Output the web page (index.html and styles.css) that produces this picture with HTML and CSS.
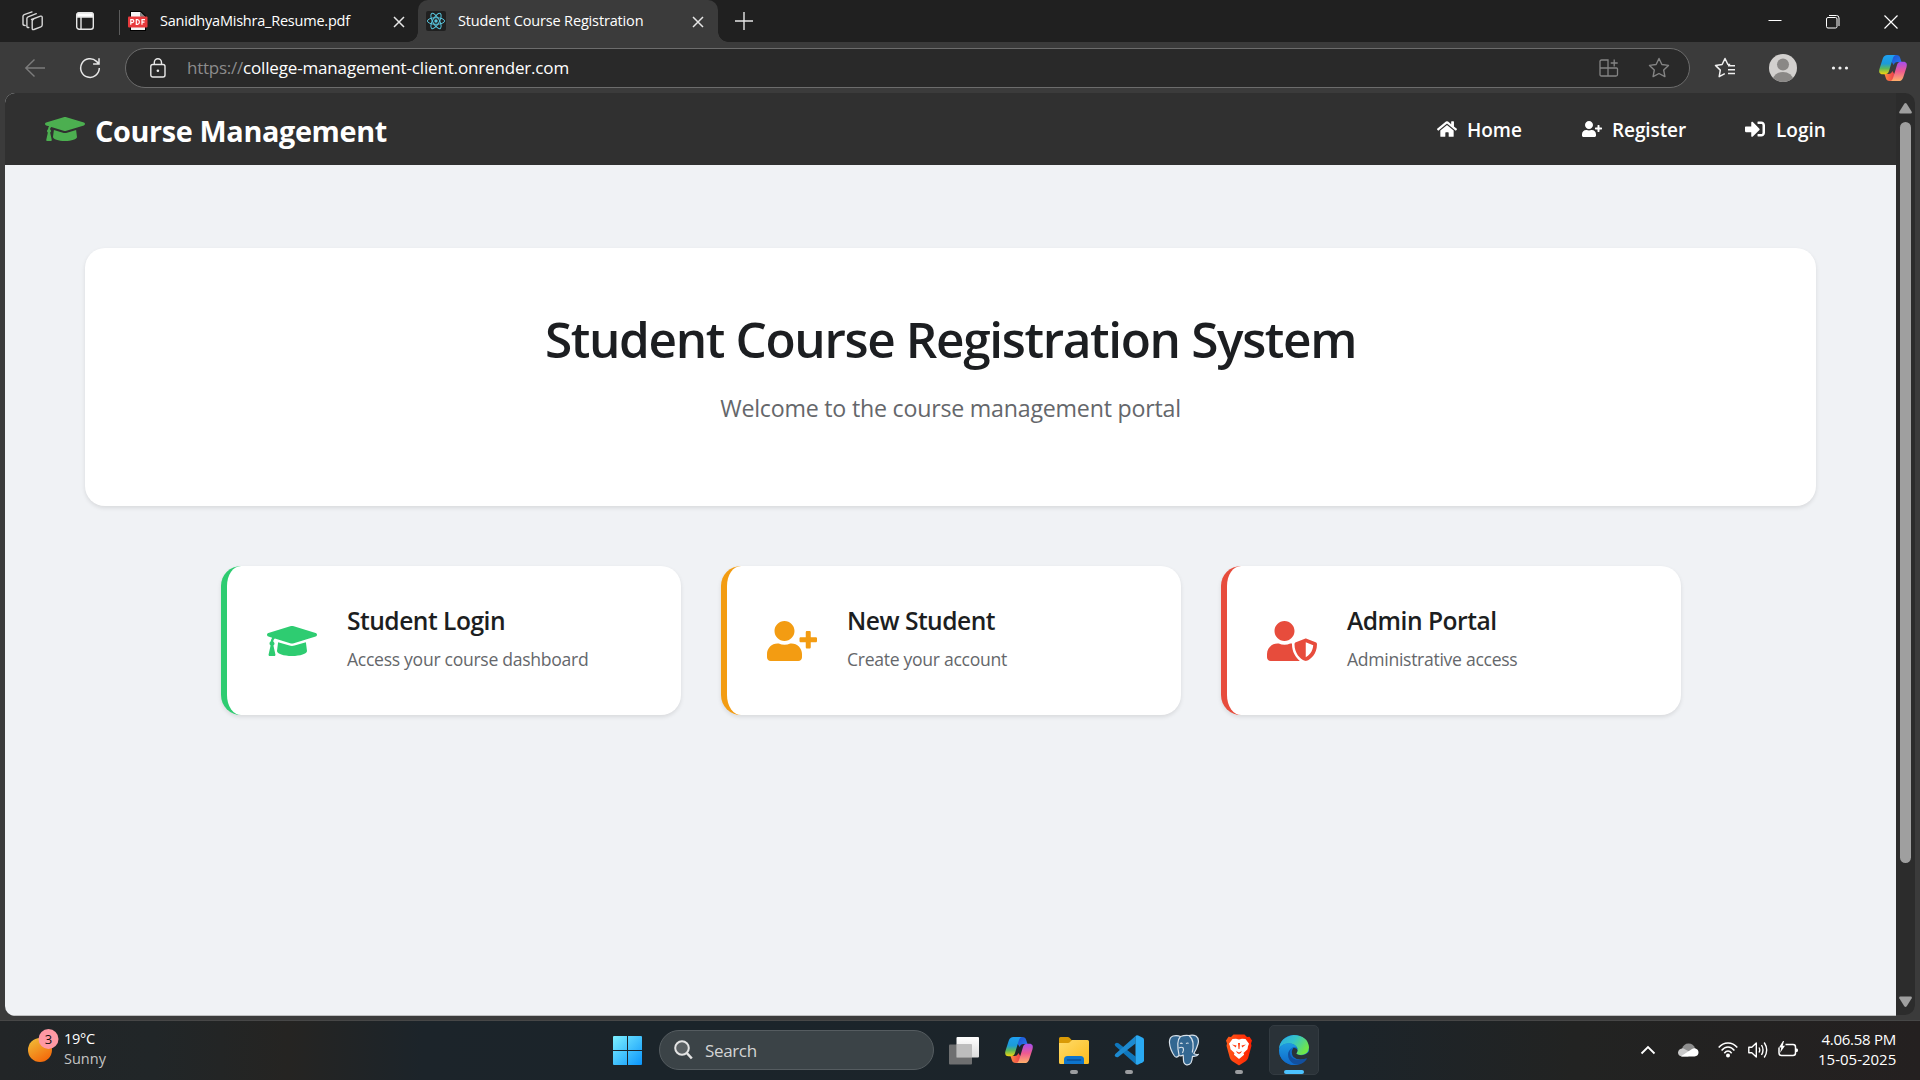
FILE: index.html
```html
<!DOCTYPE html>
<html lang="en">
<head>
<meta charset="utf-8">
<title>Student Course Registration</title>
<link rel="stylesheet" href="styles.css">
</head>
<body>
<svg class="defs" width="0" height="0" aria-hidden="true">
  <defs>
    <linearGradient id="cpBlue" x1="0" y1="0" x2="0" y2="1"><stop offset="0" stop-color="#1fa0f2"/><stop offset=".45" stop-color="#1c9bd8"/><stop offset=".7" stop-color="#5db85a"/><stop offset="1" stop-color="#f6d60c"/></linearGradient>
    <linearGradient id="cpDark" x1="0" y1="0" x2="1" y2="1"><stop offset="0" stop-color="#1b4fd0"/><stop offset="1" stop-color="#2a7df0"/></linearGradient>
    <linearGradient id="cpPink" x1="0" y1="0" x2="0" y2="1"><stop offset="0" stop-color="#a44df0"/><stop offset=".5" stop-color="#ee5a90"/><stop offset="1" stop-color="#ffb06a"/></linearGradient>
    <linearGradient id="cpRed" x1="0" y1="0" x2="1" y2="0"><stop offset="0" stop-color="#ff8a3d"/><stop offset="1" stop-color="#e8384f"/></linearGradient>
    <linearGradient id="sun" x1="0" y1="0" x2=".6" y2="1"><stop offset="0" stop-color="#f0c23a"/><stop offset="1" stop-color="#f36b0c"/></linearGradient>
    <linearGradient id="win" x1="0" y1="0" x2="1" y2="1"><stop offset="0" stop-color="#7df0ff"/><stop offset="1" stop-color="#0a95fb"/></linearGradient>
    <linearGradient id="tvBack" x1="0" y1="0" x2="0" y2="1"><stop offset="0" stop-color="#fff"/><stop offset="1" stop-color="#dcdcdc"/></linearGradient>
    <linearGradient id="folder" x1="0" y1="0" x2="1" y2="1"><stop offset="0" stop-color="#ffdb6a"/><stop offset="1" stop-color="#fcbc1c"/></linearGradient>
    <linearGradient id="brave" x1="0" y1="0" x2="1" y2="0"><stop offset="0" stop-color="#ff5a1a"/><stop offset="1" stop-color="#ff1f00"/></linearGradient>
    <linearGradient id="edgeTop" x1="0" y1="0" x2="1" y2=".5"><stop offset="0" stop-color="#2aa7e4"/><stop offset=".5" stop-color="#35c4c9"/><stop offset="1" stop-color="#6fe64a"/></linearGradient>
    <linearGradient id="edgeLeft" x1="0" y1="0" x2="0" y2="1"><stop offset="0" stop-color="#1e9be2"/><stop offset="1" stop-color="#0f68c8"/></linearGradient>
    <symbol id="copilot" viewBox="0 0 30 30">
      <path d="M13 2h5.500c2 0 3 1 3.600 2.800L23.500 9h-4c-2 0-3.200 1.200-3.800 3L13 8z" fill="url(#cpDark)"/>
      <path d="M17 28h-5.500c-2 0-3-1-3.600-2.800L6.500 21h4c2 0 3.200-1.200 3.800-3L17 22z" fill="url(#cpRed)"/>
      <path d="M9.500 2H18c-1.800.3-2.600 1.700-3.200 3.600L11 18c-.7 2.200-2 3.300-4.200 3.300H4.600C1.400 21.300.6 19 1.500 15.800L4.800 5.600C5.600 3.200 7 2 9.500 2z" fill="url(#cpBlue)"/>
      <path d="M20.500 28H12c1.800-.3 2.600-1.700 3.200-3.600L19 12c.7-2.200 2-3.300 4.200-3.300h2.200c3.200 0 4 2.300 3.100 5.500l-3.300 10.200c-.8 2.400-2.200 3.600-4.700 3.600z" fill="url(#cpPink)"/>
    </symbol>
    <symbol id="cap" viewBox="0 0 640 512"><path d="M622.34 153.2L343.4 67.5c-15.200-4.670-31.600-4.670-46.790 0L17.660 153.200c-23.540 7.230-23.540 38.360 0 45.590l48.630 14.940c-10.670 13.190-17.230 29.280-17.880 46.900C38.780 266.150 32 276.110 32 288c0 10.780 5.680 19.850 13.860 25.650L20.330 428.530C18.110 438.520 25.710 448 35.940 448h56.110c10.240 0 17.840-9.480 15.620-19.470L82.140 313.650C90.320 307.850 96 298.780 96 288c0-11.570-6.470-21.250-15.660-26.870.76-15.020 8.440-28.300 20.690-36.720L296.600 284.500c9.060 2.780 26.440 6.250 46.790 0l278.950-85.700c23.550-7.240 23.550-38.360 0-45.600zM352.790 315.090c-28.530 8.760-52.840 3.920-65.590 0l-145.020-44.550L128 384c0 35.350 85.960 64 192 64s192-28.650 192-64l-14.180-113.470-145.030 44.560z"/></symbol>
    <symbol id="user-plus" viewBox="0 0 640 512"><path d="M624 208h-64v-64c0-8.800-7.200-16-16-16h-32c-8.800 0-16 7.200-16 16v64h-64c-8.800 0-16 7.200-16 16v32c0 8.800 7.200 16 16 16h64v64c0 8.800 7.200 16 16 16h32c8.800 0 16-7.200 16-16v-64h64c8.800 0 16-7.200 16-16v-32c0-8.800-7.200-16-16-16zm-400 48c70.700 0 128-57.300 128-128S294.700 0 224 0 96 57.300 96 128s57.300 128 128 128zm89.600 32h-16.700c-22.200 10.200-46.900 16-72.900 16s-50.600-5.800-72.900-16h-16.700C60.200 288 0 348.200 0 422.400V464c0 26.500 21.500 48 48 48h352c26.500 0 48-21.500 48-48v-41.600c0-74.200-60.200-134.400-134.400-134.400z"/></symbol>
  </defs>
</svg>

<header class="tabstrip">
  <svg class="ic-workspaces" viewBox="0 0 22 20" fill="none" stroke="#d8d8d8" stroke-width="1.400" stroke-linejoin="round" stroke-linecap="round"><path d="M9.500 8.500l9-3.300c1-.3 1.700.1 1.700 1.100v7.700c0 .9-.4 1.500-1.300 1.800l-7 2.700c-1 .4-1.700 0-1.700-1V10c0-.8.500-1.300 1.300-1.600"/><path d="M6.800 16.500c-1.200.2-1.900-.2-1.900-1.300V7.500c0-.8.4-1.300 1.200-1.600l8.200-3.200"/><path d="M3.200 14.500C1.700 14.500 1 14 1 13V5.200c0-.8.400-1.300 1.200-1.600L10 .9"/></svg>
  <svg class="ic-panel" viewBox="0 0 18 18" fill="none" stroke="#e6e6e6" stroke-width="1.400"><rect x=".7" y=".7" width="16.600" height="16.600" rx="2.500"/><path d="M1 2.500Q1 1 2.500 1h13Q17 1 17 2.500V5H1z" fill="#fff"/><path d="M5 5v12"/></svg>
  <i class="tab-divider"></i>
  <div class="tab tab-pdf">
    <svg width="20" height="20" viewBox="0 0 20 20"><path d="M2 0h11l5 5v15H2z" fill="#000"/><path d="M3 1h9.500v4.500H17V19H3z" fill="#f4f4f4"/><path d="M12.500 1L17 5.500h-4.500z" fill="#888"/><rect y="5.500" width="19.500" height="11" rx="1" fill="#e83a3d"/><path d="M2.800 13.800V8.600h1.500a1.500 1.500 0 0 1 0 3H3M8.300 8.600v4.700h1.200q1.900-.2 1.900-2.300t-1.900-2.400zM14 13.800V8.600h3M14 11.200h2.500" stroke="#fff" stroke-width="1.200" fill="none"/></svg>
    <span class="tab-title t1">SanidhyaMishra_Resume.pdf</span>
    <svg class="close" viewBox="0 0 12 12"><path d="M1 1l10 10M11 1L1 11" stroke="#e6e6e6" stroke-width="1.500"/></svg>
  </div>
  <div class="tab tab-active">
    <svg width="20" height="20" viewBox="0 0 20 20" fill="none"><rect width="20" height="20" rx="2" fill="#202020"/><g stroke="#58c4dc" stroke-width="1"><ellipse cx="10" cy="10" rx="8.600" ry="3.300"/><ellipse cx="10" cy="10" rx="8.600" ry="3.300" transform="rotate(60 10 10)"/><ellipse cx="10" cy="10" rx="8.600" ry="3.300" transform="rotate(120 10 10)"/></g><circle cx="10" cy="10" r="1.700" fill="#58c4dc"/></svg>
    <span class="tab-title t2">Student Course Registration</span>
    <svg class="close" viewBox="0 0 12 12"><path d="M1 1l10 10M11 1L1 11" stroke="#e6e6e6" stroke-width="1.500"/></svg>
  </div>
  <svg class="ic-plus" viewBox="0 0 18 18"><path d="M9 0v18M0 9h18" stroke="#e6e6e6" stroke-width="1.400"/></svg>
  <div class="window-controls">
    <svg width="14" height="14" viewBox="0 0 14 14"><path d="M.5 5.500h13" stroke="#fff"/></svg>
    <svg width="14" height="14" viewBox="0 0 14 14" fill="none" stroke="#fff"><rect x=".5" y="2.500" width="10.500" height="10.500" rx="1.500"/><path d="M3 .5h7.500q2.500 0 2.500 2.500v8"/></svg>
    <svg width="14" height="14" viewBox="0 0 14 14"><path d="M.5.5l13 13M13.500.5l-13 13" stroke="#fff" stroke-width="1.200"/></svg>
  </div>
</header>

<div class="toolbar">
  <svg class="ic-back" width="22" height="22" viewBox="0 0 22 22" fill="none" stroke="#7c7c7c" stroke-width="1.400"><path d="M21 11H1.500M10.500 2.500L1.800 11l8.700 8.500"/></svg>
  <svg class="ic-reload" width="22" height="22" viewBox="0 0 22 22" fill="none" stroke="#e8e8e8" stroke-width="1.500"><path d="M20.300 11A9.300 9.300 0 1 1 17.500 4.400l2.300 2.300M20 1.200v5.900h-5.900"/></svg>
  <div class="address">
    <svg class="ic-lock" width="16" height="20" viewBox="0 0 16 20" fill="none" stroke="#e8e8e8" stroke-width="1.400"><rect x=".8" y="6.500" width="14.200" height="12.500" rx="2"/><path d="M4.300 6.500V4.400a3.600 3.600 0 0 1 7.200 0v2.100"/><circle cx="7.900" cy="12.700" r="1.300" fill="#e8e8e8" stroke="none"/></svg>
    <span class="url"><span class="scheme">https://</span><span class="host">college-management-client.onrender.com</span></span>
    <svg class="ic-apps" width="20" height="20" viewBox="0 0 20 20" fill="none" stroke="#848484" stroke-width="1.300"><path d="M2.500 2h6.500v16H2.500Q1 18 1 16.500v-13Q1 2 2.500 2zM1 10h16.500q1 0 1 1v5.500q0 1.500-1.500 1.500H9M15.200 1.500v7M11.700 5h7"/></svg>
    <svg class="ic-star" width="22" height="22" viewBox="0 0 22 22" fill="none" stroke="#848484" stroke-width="1.400" stroke-linejoin="round"><path d="M11 1.500l2.900 6 6.600.9-4.800 4.600 1.200 6.600L11 16.500l-5.900 3.100L6.300 13 1.500 8.400l6.600-.9z"/></svg>
  </div>
  <svg class="ic-favs" width="22" height="22" viewBox="0 0 22 22" fill="none" stroke="#f0f0f0" stroke-width="1.500" stroke-linejoin="round"><path d="M10.800 16.700l-5.600 3 1.100-6.600-4.800-4.700 6.600-.9 2.900-6 2.900 6h2.300M14 8.800h7M14 12.700h7M14 16.600h7"/></svg>
  <svg class="avatar" width="28" height="28" viewBox="0 0 28 28"><clipPath id="av"><circle cx="14" cy="14" r="14"/></clipPath><g clip-path="url(#av)"><rect width="28" height="28" fill="#d2d0ce"/><circle cx="14" cy="10.500" r="6" fill="#8a8886"/><ellipse cx="14" cy="25.500" rx="10" ry="7.500" fill="#8a8886"/></g></svg>
  <svg class="ic-dots" width="18" height="6" viewBox="0 0 18 6" fill="#f0f0f0"><circle cx="2.500" cy="3" r="1.600"/><circle cx="9" cy="3" r="1.600"/><circle cx="15.500" cy="3" r="1.600"/></svg>
  <svg class="ic-copilot" width="30" height="30"><use href="#copilot"/></svg>
</div>

<div class="viewport">
  <div class="page">
    <nav class="navbar">
      <svg class="brand-icon" width="40" height="32"><use href="#cap"/></svg>
      <span class="brand">Course Management</span>
      <a class="nav-link home"><svg width="20" height="18" viewBox="0 0 576 512"><path d="M280.370 148.260L96 300.110V464a16 16 0 0 0 16 16l112.060-.29a16 16 0 0 0 15.920-16V368a16 16 0 0 1 16-16h64a16 16 0 0 1 16 16v95.640a16 16 0 0 0 16 16.050L464 480a16 16 0 0 0 16-16V300L295.670 148.260a12.190 12.190 0 0 0-15.300 0zM571.600 251.470L488 182.560V44.050a12 12 0 0 0-12-12h-56a12 12 0 0 0-12 12v72.610L318.470 43a48 48 0 0 0-61 0L4.340 251.470a12 12 0 0 0-1.600 16.900l25.500 31A12 12 0 0 0 45.150 301l235.220-193.740a12.190 12.190 0 0 1 15.300 0L530.900 301a12 12 0 0 0 16.900-1.600l25.500-31a12 12 0 0 0-1.700-16.930z"/></svg><span>Home</span></a>
      <a class="nav-link register"><svg width="20" height="16"><use href="#user-plus"/></svg><span>Register</span></a>
      <a class="nav-link login"><svg width="20" height="20" viewBox="0 0 512 512"><path d="M416 448h-84c-6.600 0-12-5.400-12-12v-40c0-6.600 5.400-12 12-12h84c17.700 0 32-14.300 32-32V160c0-17.700-14.300-32-32-32h-84c-6.600 0-12-5.400-12-12V76c0-6.600 5.400-12 12-12h84c53 0 96 43 96 96v192c0 53-43 96-96 96zm-47-201L201 79c-15-15-41-4.500-41 17v96H24c-13.300 0-24 10.700-24 24v96c0 13.300 10.700 24 24 24h136v96c0 21.500 26 32 41 17l168-168c9.300-9.400 9.300-24.600 0-34z"/></svg><span>Login</span></a>
    </nav>
    <main class="content">
      <section class="hero">
        <h1>Student Course Registration System</h1>
        <p>Welcome to the course management portal</p>
      </section>
      <section class="cards">
        <a class="card green"><svg width="50" height="40"><use href="#cap"/></svg><div><h2>Student Login</h2><p>Access your course dashboard</p></div></a>
        <a class="card orange"><svg width="50" height="40"><use href="#user-plus"/></svg><div><h2>New Student</h2><p>Create your account</p></div></a>
        <a class="card red"><svg width="50" height="40" viewBox="0 0 640 512"><path d="M622.300 271.100l-115.200-45c-4.100-1.600-12.600-3.700-22.200 0l-115.200 45c-10.700 4.200-17.700 14-17.700 24.900 0 111.600 68.700 188.800 132.900 213.900 9.600 3.700 18 1.600 22.200 0C558.400 489.900 640 420.500 640 296c0-10.900-7-20.700-17.700-24.900zM496 462.400V273.300l95.500 37.300c-5.600 87.100-60.900 135.400-95.500 151.800zM224 256c70.700 0 128-57.300 128-128S294.700 0 224 0 96 57.300 96 128s57.300 128 128 128zm96 40c0-2.500.8-4.800 1.100-7.200-2.500-.1-4.900-.8-7.500-.8h-16.700c-22.200 10.200-46.900 16-72.900 16s-50.600-5.800-72.900-16h-16.700C60.200 288 0 348.200 0 422.400V464c0 26.500 21.500 48 48 48h352c6.800 0 13.300-1.500 19.200-4-54-42.900-99.200-116.700-99.200-212z"/></svg><div><h2>Admin Portal</h2><p>Administrative access</p></div></a>
      </section>
    </main>
  </div>
  <div class="scrollbar">
    <svg width="13" height="11" viewBox="0 0 13 11" fill="#9f9f9f"><path d="M5.300.8Q6.500-.6 7.700.8l5 8q.6 1.700-1 1.700H1.300q-1.600 0-1-1.700z"/></svg>
    <i class="thumb"></i>
    <svg class="down" width="13" height="11" viewBox="0 0 13 11" fill="#9f9f9f"><path d="M5.300 10.200Q6.500 11.600 7.700 10.200l5-8q.6-1.700-1-1.700H1.300q-1.600 0-1 1.700z"/></svg>
  </div>
</div>

<footer class="taskbar">
  <div class="weather">
    <svg width="33" height="36" viewBox="0 0 33 36"><circle cx="13" cy="22" r="12" fill="url(#sun)"/><circle cx="21.500" cy="11" r="10" fill="#ff99a4"/></svg>
    <b class="badge">3</b>
    <div class="weather-text"><span class="w1">19°C</span><br><span class="w2">Sunny</span></div>
  </div>
  <svg class="start" width="29" height="29" viewBox="0 0 29 29"><path d="M1 0h13v14H0V1Q0 0 1 0zM15 0h13q1 0 1 1v13H15zM0 15h14v14H1q-1 0-1-1zM15 15h14v13q0 1-1 1H15z" fill="url(#win)"/></svg>
  <div class="search">
    <svg width="19" height="20" viewBox="0 0 19 20" fill="none" stroke="#e4e4e4"><circle cx="8" cy="8" r="6.800" stroke-width="2" fill="#5a6063"/><path d="M12.800 13l5 5.500" stroke-width="2.600"/></svg>
    <span>Search</span>
  </div>
  <div class="apps">
    <div class="app"><svg width="32" height="32" viewBox="0 0 32 32"><rect x="8.500" y="3" width="22.500" height="20.500" rx="1" fill="url(#tvBack)"/><rect x="1" y="10.500" width="23" height="20" rx="1" fill="#7d7d7d" opacity=".85"/><path d="M8.500 10.500H24v13H8.500z" fill="#bdbdbd"/></svg></div>
    <div class="app"><svg width="30" height="30"><use href="#copilot"/></svg></div>
    <div class="app running"><svg width="32" height="32" viewBox="0 0 32 32"><path d="M1 4.500Q1 3 2.500 3h7.300q1 0 1.700.8L14 6.500V12H1z" fill="#d99a06"/><path d="M14 6h15.500Q31 6 31 7.500v21q0 1.500-1.500 1.500h-27Q1 30 1 28.500V9h9q1.200 0 2-1z" fill="url(#folder)"/><path d="M6 30v-4.500Q6 22 9.500 22h13q3.500 0 3.500 3.500V30z" fill="#0d74cc"/><path d="M9.500 26h13" stroke="#0a4f96" stroke-width="1.500" stroke-linecap="round"/></svg></div>
    <div class="app running"><svg width="32" height="32" viewBox="0 0 32 32"><path d="M2.500 9.200q-1.600 1.300-.2 2.700L22.500 30V22.500L5.500 9.300q-1.500-1-3-.1z" fill="#0f77bd"/><path d="M2.500 22.800q-1.600-1.300-.2-2.700L22.500 2v7.500L5.500 22.700q-1.500 1-3 .1z" fill="#1d8ad0"/><path d="M22.500 2q1.200-1.100 2.700-.4l4.600 2.200q1.200.6 1.200 2v20.400q0 1.400-1.200 2l-4.600 2.200q-1.500.7-2.700-.4z" fill="#2aa9f2"/></svg></div>
    <div class="app"><svg width="32" height="32" viewBox="0 0 32 32" fill="#336791" stroke="#d9e2ea" stroke-width="1.200" stroke-linejoin="round"><path d="M11 21.500q-2.500 3-4.500.5Q2 15.500 1.500 9 1 3.500 5 2q4-1 7.500.5Q17 .8 21 1.500q4-1 7 .5 3.500 2.500 2 8-1.500 5.500-4.200 9.500 2.200 1.500 4.700.8-1.500 2.500-6 2-.3 4-1.500 6.500-1.500 2.500-4.500 2-2.700-.5-3-4.300l-.3-5.500q-2.200 1.500-4.200.5z"/><path d="M12.500 2.500Q10 5 9.800 9.500T11 21M21 1.500q3.500 3 4 7.500t-.7 9.500M11 14q2.500-1.500 4.200 0 1 2-.7 5M18 9.500q2-1 2.500 0M12 9.500q1.500-.8 2.500.3" fill="none"/></svg></div>
    <div class="app running"><svg width="32" height="32" viewBox="0 0 32 32"><path d="M10.500.5h11L24 3l2.500-.2L29 6.500l-1 3 .5 2.200-3.300 12q-.6 2-2.200 3.200L16.700 31q-.7.4-1.400 0L9 26.900q-1.600-1.200-2.200-3.200l-3.300-12L4 9.500l-1-3 2.500-3.700L8 3z" fill="url(#brave)"/><path d="M16 5.500l3-.8 3.500.4 3.500 4.700-1 2.500-.5 3-4 3.700.6 1.800L16 25l-5.100-4.200.6-1.800-4-3.700-.5-3-1-2.500 3.500-4.700 3.500-.4z" fill="#fff"/><path d="M9 10.500l4.500 1-.7 2zM23 10.500l-4.500 1 .7 2zM15 9h2l-.5 6h-1zM13 17l3 1.500 3-1.500-1.200 2L16 20l-1.800-1z" fill="#ff3c12"/></svg></div>
    <div class="app active"><svg width="32" height="32" viewBox="0 0 32 32"><circle cx="16" cy="16" r="15" fill="#0f68c8"/><path d="M1 15Q2 3 15.500 1 30 1.500 31 13.500q-.3 7.500-8.500 7.500-4-.3-4.300-1.700 2-2 1.300-5Q17 9 10 9.500 3 10 1 15z" fill="url(#edgeTop)"/><path d="M1 16Q3 9 11 9.200q6 .5 8 4.300-4-1.500-6.500 1.500-3.500 5 .5 10.500 3.500 4.500 8.500 4.500Q16 32 11 30.200 1 26 1 16z" fill="url(#edgeLeft)"/><path d="M12.500 15q-2 6 2 9 5.500 4 13.500.2 1.700-1 1 .5-3 4.500-8 5.800-6 .5-9.500-4.500-3.500-6 1-11z" fill="#124f9e"/><path d="M15.500 13.800q4 .7 4 3-.2 1.700-1.300 2.800 1 1.500 5 1.700 4.500 0 8.300-4.300l.5 6q-1.500 1-4 1.600-8 2.400-12.500-1.600-3.500-4.700 0-9.200z" fill="#2a3238"/></svg></div>
  </div>
  <div class="tray">
    <svg class="chev" width="16" height="10" viewBox="0 0 16 10" fill="none" stroke="#fff" stroke-width="1.800"><path d="M1.500 8.500L8 2l6.500 6.500"/></svg>
    <svg class="cloud" width="21" height="14" viewBox="0 0 21 14"><path d="M4 6Q5.500.5 10.500.5T17 5.500l-6 5z" fill="#8e8e8e"/><path d="M0 9.500Q.5 5.500 5 5.200l10 5.300L10 13.500H4Q0 13 0 9.500z" fill="#c9c9c9"/><path d="M3 13.200L14 6q1.500-1 3-.7 3.500 1 3.500 4.200 0 3.500-4 4H4z" fill="#fff"/></svg>
    <svg class="wifi" width="20" height="18" viewBox="0 0 20 18" fill="none" stroke="#fff" stroke-width="1.500"><path d="M.7 6.500Q4.500 2 10 2t9.300 4.500M3.600 9.500Q6.300 6 10 6t6.400 3.500M6.300 12.200Q8 10 10 10t3.700 2.200"/><circle cx="10" cy="14.500" r="2" fill="#fff" stroke="none"/></svg>
    <svg class="vol" width="20" height="18" viewBox="0 0 20 18" fill="none" stroke="#fff" stroke-width="1.400"><path d="M.8 6.300h3L8.300 2v14l-4.500-4.300h-3z" stroke-linejoin="round"/><path d="M11 6.500q1.500 2.500 0 5M13.500 4q3 5 0 10M16.200 1.500q5 7.500 0 15"/></svg>
    <svg class="batt" width="21" height="18" viewBox="0 0 21 18" fill="none" stroke="#fff" stroke-width="1.500"><path d="M7.500 3.500H15q2.500 0 2.500 2.500v6q0 2.500-2.500 2.500H3.500Q1 14.500 1 12V6.500"/><path d="M18 7.500h1q1 0 1 1.700t-1 1.700h-1z" fill="#fff" stroke="none"/><path d="M5 0L1 6.500h2.300L2 12l5-7.200H4.700L6 0z" fill="#fff" stroke="none"/></svg>
    <div class="clock"><span class="k1">4.06.58 PM</span><br><span>15-05-2025</span></div>
  </div>
</footer>
</body>
</html>
```
FILE: styles.css
```css
* { box-sizing: border-box; }
body { margin: 0; width: 1920px; height: 1080px; overflow: hidden; display: flex; flex-direction: column; background: #3b3b3b; color: #fff; font-family: "Open Sans", "Noto Sans", sans-serif; }
svg { display: block; flex: none; }
.defs { position: absolute; }
h1, h2, p { margin: 0; }

/* Browser tabs */
.tabstrip { height: 42px; flex: none; background: #202020; display: flex; align-items: flex-start; }
.ic-workspaces { width: 22px; height: 20px; margin: 11px 0 0 22px; }
.ic-panel { width: 18px; height: 18px; margin: 12px 0 0 32px; }
.tab-divider { width: 1px; height: 25px; background: #5c5c5c; margin: 10px 0 0 25px; }
.tab { height: 42px; display: flex; align-items: center; position: relative; }
.tab-pdf { width: 298px; padding-left: 8px; }
.tab-active { width: 300px; padding-left: 8px; background: #3b3b3b; border-radius: 10px 10px 0 0; }
.tab-active::before, .tab-active::after { content: ""; position: absolute; bottom: 0; width: 10px; height: 10px; }
.tab-active::before { left: -10px; background: radial-gradient(circle at 0 0, transparent 9.5px, #3b3b3b 10px); }
.tab-active::after { right: -10px; background: radial-gradient(circle at 100% 0, transparent 9.5px, #3b3b3b 10px); }
.tab-title { margin-left: 12px; font-size: 14.5px; white-space: nowrap; flex: 1; line-height: 42px; height: 42px; }
.t1 { letter-spacing: -.22px; }
.t2 { letter-spacing: -.15px; }
.close { width: 12px; height: 12px; margin: 2px 14px 0 0; }
.tab-pdf .close { margin-right: 13px; }
.ic-plus { width: 18px; height: 18px; margin: 12px 0 0 17px; }
.window-controls { margin: 15px 22px 0 auto; display: flex; gap: 44px; }

/* Address bar */
.toolbar { height: 51px; flex: none; display: flex; align-items: center; padding: 0 12px 0 24px; }
.ic-reload { margin-left: 33px; }
.address { width: 1565px; height: 40px; margin-left: 24px; padding: 0 19px 0 24px; border: 1px solid #6c6c6c; border-radius: 20px; background: #292929; display: flex; align-items: center; }
.url { flex: 1; margin-left: 21px; font-size: 17px; letter-spacing: -.16px; line-height: 38px; height: 38px; white-space: nowrap; display: flex; }
.scheme { color: #8c8c8c; width: 56px; letter-spacing: -.25px; }
.ic-star { margin-left: 29px; }
.ic-favs { margin-left: 24px; }
.avatar { margin-left: 33px; }
.ic-dots { margin-left: 34px; }
.ic-copilot { margin-left: 29px; }

/* Site */
.viewport { height: 923px; flex: none; margin: 0 5px; display: flex; border-radius: 10px; overflow: hidden; }
.page { width: 1891px; background: #f0f2f5; color: #1c1e21; border-bottom: 1px solid #bfc0c1; }
.navbar { height: 72px; background: #303030; color: #fff; display: flex; align-items: center; padding-left: 40px; fill: #fff; }
.brand-icon { fill: #4caf50; }
.brand { margin-left: 10px; padding-top: 2px; width: 300px; font-size: 28.8px; letter-spacing: -.35px; font-weight: 700; white-space: nowrap; }
.nav-link { display: flex; align-items: center; gap: 10px; font-size: 19px; font-weight: 600; line-height: 32px; white-space: nowrap; }
.nav-link span { height: 30px; }
.home { margin-left: auto; width: 145px; }
.register { width: 163px; letter-spacing: -.1px; }
.login { width: 151px; gap: 11px; }

.content { padding: 83px 80px 0; }
.hero { height: 258px; border-radius: 20px; background: #fff; box-shadow: 0 2px 4px rgba(0,0,0,.1); text-align: center; padding-top: 59px; }
.hero h1 { font-size: 49.5px; font-weight: 600; line-height: 64px; letter-spacing: -1.36px; white-space: nowrap; }
.hero p { margin-top: 19px; font-size: 23.2px; line-height: 36px; letter-spacing: -.22px; color: #65676b; }
.cards { margin: 60px 0 0 136px; display: flex; gap: 40px; }
.card { width: 460px; height: 149px; border-left: 6px solid; border-radius: 20px; background: #fff; box-shadow: 0 2px 4px rgba(0,0,0,.1); display: flex; align-items: center; padding-left: 40px; gap: 30px; }
.card > div { padding-bottom: 6px; }
.green { border-color: #2ecc71; fill: #2ecc71; }
.orange { border-color: #f39c12; fill: #f39c12; }
.red { border-color: #e74c3c; fill: #e74c3c; }
.card h2 { font-size: 24.6px; font-weight: 600; line-height: 38px; letter-spacing: -.5px; white-space: nowrap; }
.card p { font-size: 17.6px; line-height: 28px; margin-top: 5px; letter-spacing: -.3px; color: #65676b; white-space: nowrap; }

.scrollbar { width: 19px; height: 922px; background: #2c2c2c; display: flex; flex-direction: column; align-items: center; padding: 10px 0 8px; border-radius: 0 0 10px; }
.thumb { width: 11px; height: 741px; margin-top: 8px; border-radius: 6px; background: #9f9f9f; }
.down { margin-top: auto; }

/* Taskbar */
.taskbar { height: 60px; margin-top: 4px; flex: none; display: flex; align-items: center; padding: 0 24px 1px 27px; background: linear-gradient(90deg, #222527 0%, #212628 8%, #252422 15%, #1c242a 22%, #1b242a 33%, #1c242a 70%, #222322 82%, #242020 100%); border-top: 1px solid #474747; }
.weather { width: 586px; display: flex; position: relative; padding-bottom: 4px; }
.weather-text { margin-left: 4px; padding-top: 1px; font-size: 14.5px; line-height: 20px; }
.w1 { letter-spacing: -.3px; }
.w2 { color: #c4c4c4; }
.badge { position: absolute; left: 11.5px; top: 1px; width: 20px; text-align: center; font-size: 13px; line-height: 20px; font-weight: 400; color: #111; }
.search { width: 275px; height: 40px; margin-left: 17px; padding-left: 14px; border: 1px solid #555c60; border-radius: 20px; background: #3b4347; display: flex; align-items: center; gap: 12px; font-size: 17px; letter-spacing: -.35px; color: #d4d4d4; }
.apps { display: flex; gap: 5px; margin-left: 5px; }
.app { width: 50px; height: 50px; display: flex; align-items: center; justify-content: center; position: relative; border-radius: 5px; }
.active { background: #2a3238; border: 1px solid #333b41; }
.running::after, .active::after { content: ""; position: absolute; left: 21px; bottom: 1px; width: 8px; height: 4px; border-radius: 2px; background: #9b9da0; }
.active::after { left: 14px; bottom: 0; width: 20px; background: #4cc2ff; }
.tray { margin-left: auto; display: flex; align-items: center; }
.cloud { margin-left: 22px; }
.wifi { margin-left: 19px; }
.vol { margin-left: 10px; }
.batt { margin-left: 10px; }
.clock { margin-left: 19px; width: 78px; font-size: 15px; line-height: 20px; text-align: right; white-space: nowrap; padding-bottom: 3px; }
.k1 { letter-spacing: -.27px; }
```
